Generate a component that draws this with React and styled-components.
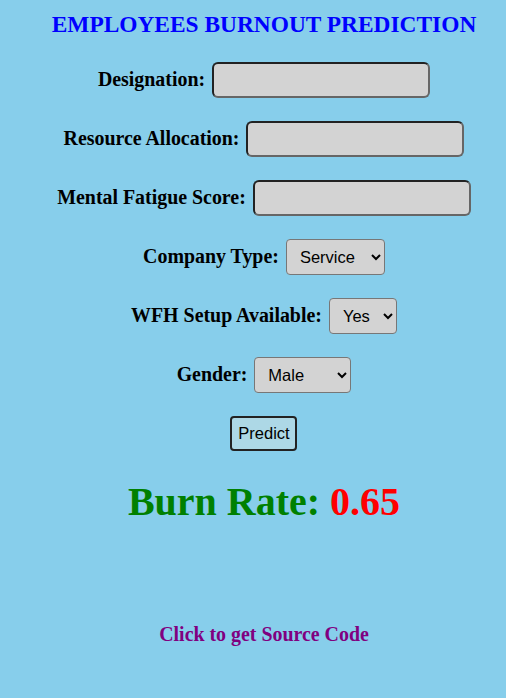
import React from "react"
import styled, { createGlobalStyle } from "styled-components"

const GlobalStyle = createGlobalStyle`
  html, body {
    margin: 0;
    padding: 0;
    background: #87ceeb;
    font-family: "Liberation Serif", "Times New Roman", serif;
  }
`

const App = () => {
  return (
    <>
      <GlobalStyle />
      <Page>
        <Title>EMPLOYEES BURNOUT PREDICTION</Title>
        <Form>
          <Row>
            <Label>Designation:</Label>
            <TextInput type="text" />
          </Row>
          <Row>
            <Label>Resource Allocation:</Label>
            <TextInput type="text" />
          </Row>
          <Row>
            <Label>Mental Fatigue Score:</Label>
            <TextInput type="text" />
          </Row>
          <Row>
            <Label>Company Type:</Label>
            <Select $width={99} defaultValue="Service">
              <option>Service</option>
              <option>Product</option>
            </Select>
          </Row>
          <Row>
            <Label>WFH Setup Available:</Label>
            <Select $width={68} defaultValue="Yes">
              <option>Yes</option>
              <option>No</option>
            </Select>
          </Row>
          <Row>
            <Label>Gender:</Label>
            <Select $width={97} defaultValue="Male">
              <option>Male</option>
              <option>Female</option>
            </Select>
          </Row>
          <Button type="button">Predict</Button>
        </Form>
        <Result>
          Burn Rate: <Value>0.65</Value>
        </Result>
        <SourceLink href="#">Click to get Source Code</SourceLink>
      </Page>
    </>
  )
}

export default App

const Page = styled.div`
  min-height: 698px;
  display: flex;
  flex-direction: column;
  align-items: center;
  padding: 11px 0 0 22px;
  box-sizing: border-box;
`

const Title = styled.h1`
  margin: 0;
  font-size: 23.4px;
  font-weight: bold;
  color: #0000ff;
  line-height: 26px;
  text-align: center;
  white-space: nowrap;
`

const Form = styled.form`
  display: flex;
  flex-direction: column;
  align-items: center;
  gap: 24px;
  margin-top: 25px;
`

const Row = styled.div`
  display: flex;
  align-items: center;
  justify-content: center;
  gap: 7px;
  height: 35px;
`

const Label = styled.label`
  font-size: 19.9px;
  font-weight: bold;
  color: #000;
  white-space: nowrap;
`

const TextInput = styled.input`
  width: 218px;
  height: 36px;
  box-sizing: border-box;
  background: #d3d3d3;
  border: 2px solid #222;
  border-right-color: #666;
  border-bottom-color: #666;
  border-radius: 6px;
  padding: 0 8px;
  font-size: 16px;
`

const Select = styled.select`
  width: ${(p) => p.$width}px;
  height: 36px;
  box-sizing: border-box;
  background: #d3d3d3;
  border: 1px solid #777;
  border-radius: 4px;
  padding: 0 4px 0 9px;
  font-family: "Liberation Sans", Arial, sans-serif;
  font-size: 16.5px;
  color: #000;
`

const Button = styled.button`
  width: 67px;
  height: 35px;
  box-sizing: border-box;
  background: #add8e6;
  border: 2px solid #222;
  border-radius: 4px;
  font-family: "Liberation Sans", Arial, sans-serif;
  font-size: 16.5px;
  color: #000;
  padding: 0;
`

const Result = styled.h2`
  margin: 28px 0 0;
  font-size: 40px;
  font-weight: bold;
  color: #008000;
  line-height: 46px;
`

const Value = styled.span`
  color: #ff0000;
`

const SourceLink = styled.a`
  margin-top: 98px;
  font-size: 19.9px;
  font-weight: bold;
  color: #800080;
  text-decoration: none;
`
